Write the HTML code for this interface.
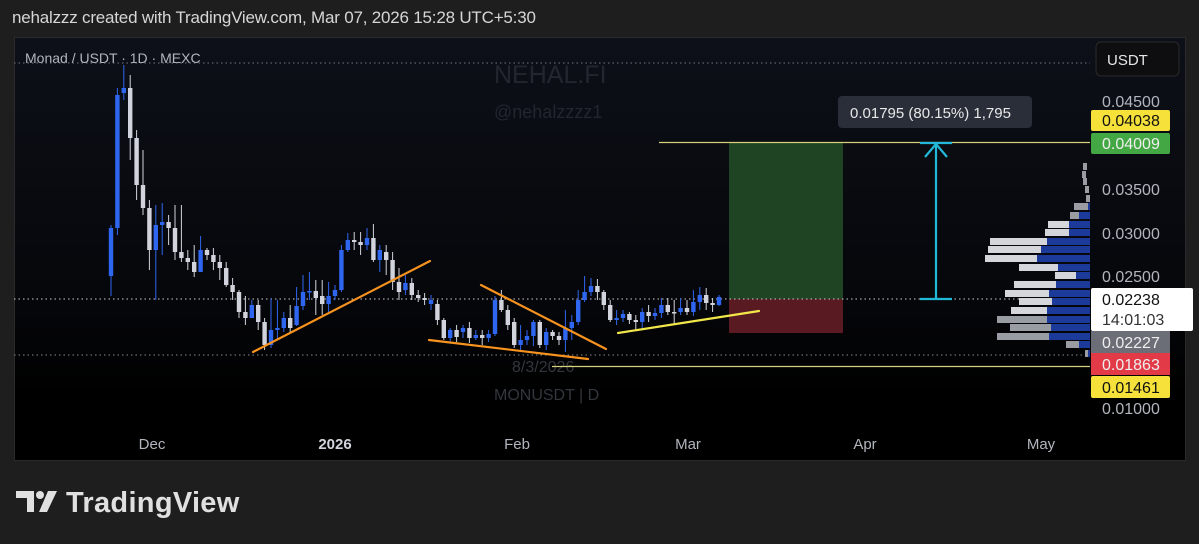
<!DOCTYPE html>
<html><head><meta charset="utf-8"><style>
html,body{margin:0;padding:0;background:#1e1e1e;width:1199px;height:544px;overflow:hidden;font-family:"Liberation Sans",sans-serif}
.hdr{position:absolute;left:12px;top:8px;font-size:17px;color:#d6d6d6;letter-spacing:-0.2px}
.panel{position:absolute;left:14px;top:37px;width:1172px;height:424px;background:linear-gradient(#0d1018 0%,#06070b 60%,#000 85%);border:1px solid #2a2a2a;box-sizing:border-box}
svg text{font-family:"Liberation Sans",sans-serif}
</style></head><body>
<div class="hdr">nehalzzz created with TradingView.com, Mar 07, 2026 15:28 UTC+5:30</div>
<div class="panel"></div>
<svg id="s" width="1199" height="544" style="position:absolute;left:0;top:0">
<text x="25" y="63" font-size="14" fill="#b2b5be">Monad / USDT · 1D · MEXC</text>
<line x1="14" y1="63" x2="1090" y2="63" stroke="#777" stroke-dasharray="1.5 3"/>
<text x="494" y="83" font-size="25" fill="#23262e">NEHAL.FI</text>
<text x="494" y="118" font-size="18" fill="#23262e">@nehalzzzz1</text>
<text x="512" y="372" font-size="16" fill="#33363d">8/3/2026</text>
<text x="494" y="400" font-size="16" fill="#33363d">MONUSDT | D</text>
<rect x="729" y="143" width="114" height="156" fill="#1e4424"/>
<rect x="729" y="299" width="114" height="34" fill="#5a1a22"/>
<line x1="659" y1="142.5" x2="1090" y2="142.5" stroke="#d8cf7a" stroke-width="1.3"/>
<line x1="552" y1="366.5" x2="1090" y2="366.5" stroke="#d8cf7a" stroke-width="1.3"/>
<line x1="14" y1="299" x2="1090" y2="299" stroke="#ccc" stroke-dasharray="1.5 3"/>
<line x1="14" y1="355" x2="1090" y2="355" stroke="#888" stroke-dasharray="1.5 3"/>
<g id="c"></g>
<g stroke="#f7931e" stroke-width="2.2" stroke-linecap="round">
<line x1="253" y1="352" x2="430" y2="261"/>
<line x1="429" y1="340" x2="588" y2="359"/>
<line x1="481" y1="285" x2="606" y2="349"/>
</g>
<line x1="618" y1="333" x2="759" y2="311" stroke="#f2e74a" stroke-width="2.2" stroke-linecap="round"/>
<g stroke="#22b8d8" stroke-width="2.2" fill="none">
<line x1="936" y1="144" x2="936" y2="299"/>
<line x1="920" y1="143" x2="952" y2="143"/>
<line x1="920" y1="299" x2="952" y2="299"/>
<polyline points="925,157 936,144 947,157"/>
</g>
<rect x="838" y="96" width="194" height="32" rx="4" fill="#2a2e39"/>
<text x="850" y="118" font-size="15" fill="#e8e8e8">0.01795 (80.15%) 1,795</text>
<g id="vp"></g>
<rect x="1096" y="42" width="83" height="34" rx="5" fill="#0e0e10" stroke="#2a2a2a"/>
<text x="1107" y="65" font-size="15" fill="#e6e6e6">USDT</text>
<g font-size="16" fill="#b2b5be">
<text x="1102" y="107">0.04500</text>
<text x="1102" y="195">0.03500</text>
<text x="1102" y="239">0.03000</text>
<text x="1102" y="282">0.02500</text>
<text x="1102" y="414">0.01000</text>
</g>
<rect x="1091" y="110" width="79" height="21" rx="2" fill="#f5e13a"/>
<text x="1102" y="126" font-size="16" fill="#111">0.04038</text>
<rect x="1091" y="133" width="79" height="21" rx="2" fill="#43a843"/>
<text x="1102" y="149" font-size="16" fill="#eee">0.04009</text>
<rect x="1091" y="288" width="102" height="43" rx="2" fill="#fff"/>
<text x="1102" y="305" font-size="16" fill="#111">0.02238</text>
<text x="1102" y="325" font-size="16" fill="#333">14:01:03</text>
<rect x="1091" y="331" width="79" height="22" fill="#6b6e76"/>
<text x="1102" y="348" font-size="16" fill="#eee">0.02227</text>
<rect x="1091" y="353" width="79" height="22" fill="#e23a46"/>
<text x="1102" y="370" font-size="16" fill="#eee">0.01863</text>
<rect x="1091" y="376" width="79" height="22" rx="2" fill="#f5e13a"/>
<text x="1102" y="393" font-size="16" fill="#111">0.01461</text>
<g font-size="15" fill="#b2b5be" text-anchor="middle">
<text x="152" y="449">Dec</text>
<text x="335" y="449" font-weight="bold" fill="#d1d4dc">2026</text>
<text x="517" y="449">Feb</text>
<text x="688" y="449">Mar</text>
<text x="865" y="449">Apr</text>
<text x="1041" y="449">May</text>
</g>
<g fill="#e0e0e0">
<path d="M16 491 H34 V512 H27 V498 H16 Z"/>
<circle cx="40" cy="495" r="4"/>
<path d="M48 491 H57 L47 512 H39 Z"/>
</g>
<text x="66" y="512" font-size="29" font-weight="bold" fill="#e0e0e0" letter-spacing="0.3">TradingView</text>
</svg>
<script>
var d=[[276,228,225,296],[228,95,88,235],[93,88,65,100],[88,138,75,160],[138,185,130,200],[185,208,150,215],[208,250,200,270],[250,225,205,300],[225,222,203,255],[222,228,215,245],[228,252,205,260],[252,258,205,262],[258,262,250,270],[262,272,245,277],[272,250,236,272],[250,255,248,260],[255,262,248,270],[262,268,255,280],[268,285,262,287],[285,292,278,300],[292,312,290,318],[312,318,296,325],[318,305,300,318],[305,322,300,330],[322,345,318,350],[345,330,298,348],[330,328,300,340],[328,318,312,332],[318,328,305,332],[325,306,287,326],[306,292,275,310],[292,291,272,300],[291,298,280,315],[296,304,280,315],[304,296,282,312],[296,290,285,300],[290,250,245,292],[250,240,233,252],[240,242,232,250],[242,245,232,255],[245,238,228,250],[238,260,224,262],[260,250,245,272],[252,260,245,275],[260,282,252,290],[282,292,268,300],[290,283,275,295],[283,295,278,300],[295,298,290,302],[298,300,293,305],[304,300,295,310],[304,320,300,325],[320,338,318,340],[338,330,328,342],[330,337,325,342],[332,328,325,338],[328,338,322,343],[338,335,330,340],[335,338,330,345],[338,334,330,342],[334,300,296,336],[300,310,290,312],[310,325,305,330],[322,345,318,348],[345,340,325,350],[340,336,330,345],[336,322,320,346],[322,345,320,348],[345,332,328,350],[332,336,330,340],[336,340,332,345],[340,328,310,352],[328,322,315,340],[322,300,290,325],[300,292,276,302],[292,286,278,296],[286,292,279,300],[292,305,290,310],[305,320,300,322],[320,318,310,325],[318,314,310,322],[314,320,312,324],[320,322,315,330],[322,312,308,330],[312,316,305,322],[316,313,308,320],[313,305,298,318],[305,312,298,315],[312,313,300,325],[312,308,298,315],[308,312,300,315],[312,302,290,316],[302,295,287,310],[295,303,288,310],[303,305,298,312],[305,297,295,306]];
var h='';
d.forEach(function(c,i){var x=111+i*6.4,o=c[0],cl=c[1],up=cl<o,col=up?'#2f66f0':'#d1d4dc';var t=Math.min(o,cl),b=Math.max(o,cl);if(b-t<1.5)b=t+1.5;
h+='<line x1="'+x+'" x2="'+x+'" y1="'+c[2]+'" y2="'+c[3]+'" stroke="'+col+'" stroke-width="1"/><rect x="'+(x-2.2)+'" y="'+t+'" width="4.4" height="'+(b-t)+'" fill="'+col+'"/>';});
document.getElementById('c').innerHTML=h;
var v=[[163,1083,1083],[171,1082,1082],[178,1083,1083],[186,1085,1085],[195,1086,1086],[203,1074,1088],[212,1070,1079],[221,1048,1069],[229,1045,1069],[238,990,1047],[246,988,1041],[255,985,1037],[264,1019,1058],[272,1055,1076],[281,1014,1056],[290,1005,1049],[298,1019,1052],[307,1011,1047],[316,997,1047],[324,1010,1051],[333,997,1049],[341,1066,1079],[350,1085,1088]];
var g='';v.forEach(function(r,i){var gc=(i<7||i>=18)?'#9a9ca3':'#d4d6dc';g+='<rect x="'+r[1]+'" y="'+r[0]+'" width="'+(r[2]-r[1]+(i<5?4:0))+'" height="7" fill="'+gc+'"/>';if(i>=5)g+='<rect x="'+r[2]+'" y="'+r[0]+'" width="'+(1090-r[2])+'" height="7" fill="#1c3a9a"/>';});
document.getElementById('vp').innerHTML=g;
</script>
</body></html>
